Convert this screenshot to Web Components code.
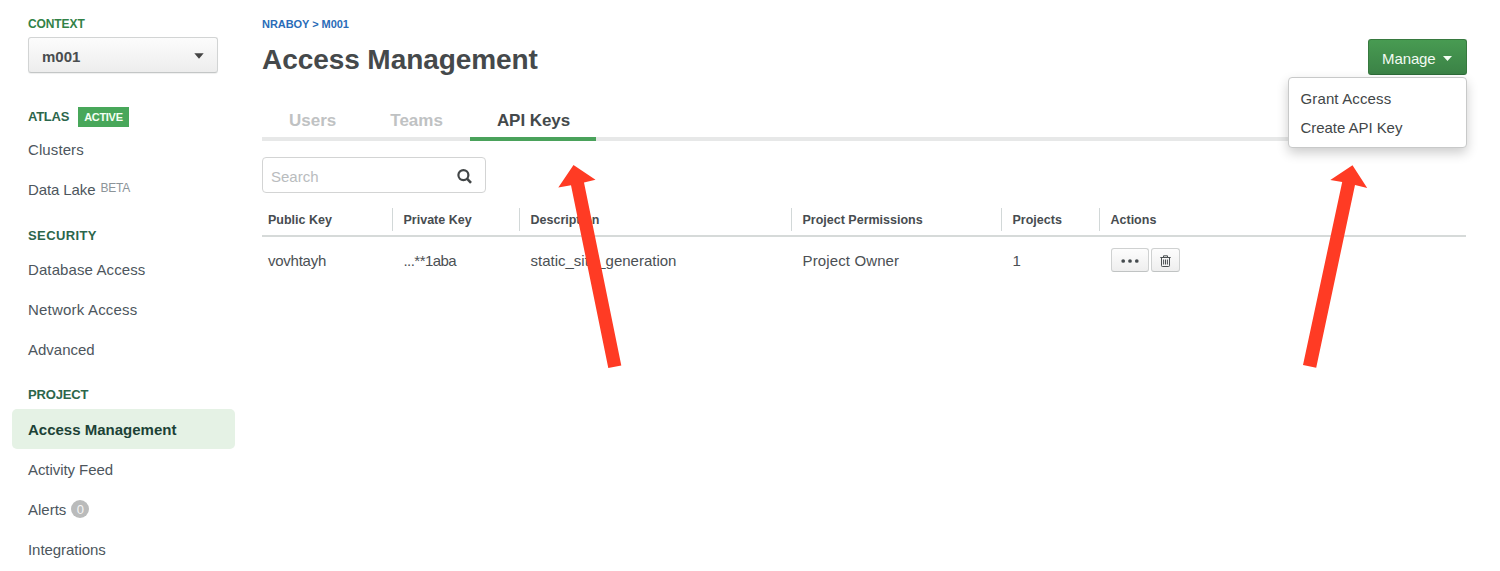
<!DOCTYPE html>
<html lang="en">
<head>
<meta charset="utf-8">
<title>Access Management</title>
<style>
html,body{margin:0;background:#fff;overflow:hidden}
body{font-family:"Liberation Sans",Arial,sans-serif;font-size:15px;color:#464c4f;height:571px}
</style>
</head>
<body>
<access-app></access-app>
<script>
const define = (name, html) => customElements.define(name, class extends HTMLElement {
  constructor() {
    super();
    this.attachShadow({ mode: 'open' }).innerHTML = '<style>*{box-sizing:border-box}</style>' + html;
  }
});

define('nav-heading', `<style>
:host{display:flex;box-sizing:border-box;height:40px;padding:11px 0 0 16px;align-items:center;gap:9px;font-size:13px;font-weight:700;color:#2c664b;white-space:nowrap}
</style><span><slot></slot></span><slot name="badge"></slot>`);

define('status-badge', `<style>
:host{display:block;box-sizing:border-box;width:51px;height:20px;padding-left:6px;background:#48a75a;color:#f4fff4;font-size:11px;line-height:20px;font-weight:700;letter-spacing:-.3px}
</style><slot></slot>`);

define('nav-item', `<style>
:host{display:flex;box-sizing:border-box;height:40px;padding-left:16px;align-items:center;gap:5px;border-radius:5px;color:#4d565d;white-space:nowrap}
:host([active]){background:#e5f2e5;color:#1c4236;font-weight:700}
</style><span><slot></slot></span><slot name="extra"></slot>`);

define('beta-tag', `<style>
:host{display:block;font-size:12px;color:#8c9499;margin-top:-3px;letter-spacing:-.2px}
</style><slot></slot>`);

define('count-badge', `<style>
:host{display:block;width:18px;height:18px;border-radius:9px;background:#babbbb;color:#f4f4f4;font-size:13px;line-height:19px;text-align:center}
</style><slot></slot>`);

define('context-select', `<style>
:host{display:flex;box-sizing:border-box;align-items:center;justify-content:space-between;margin:6px 17px 0 16px;height:36px;padding:2px 13px 0;border:1px solid #d2d4d4;border-bottom-color:#c3c6c6;border-radius:3px;background:linear-gradient(#fcfcfc,#ededed);box-shadow:0 1px 1px #0001;font-weight:700;color:#494d4f}
svg{display:block}
</style><slot></slot><svg width="10" height="6"><path d="M.3 .3h9.4L5 5.8z" fill="#444"/></svg>`);

define('side-bar', `<style>
:host{display:block;padding:17px 0 0 12px;width:235px;box-sizing:border-box}
.label{margin-left:16px;height:14px;line-height:15px;font-size:12px;font-weight:700;letter-spacing:-.1px;color:#328247}
nav{margin-top:17px}
</style>
<div class="label">CONTEXT</div>
<context-select>m001</context-select>
<nav>
<nav-heading style="letter-spacing:-.25px;padding-top:13px">ATLAS<status-badge slot="badge">ACTIVE</status-badge></nav-heading>
<nav-item style="height:39px;letter-spacing:.1px">Clusters</nav-item>
<nav-item style="letter-spacing:-.1px">Data Lake<beta-tag slot="extra">BETA</beta-tag></nav-item>
<nav-heading style="letter-spacing:.4px;padding-top:12px">SECURITY</nav-heading>
<nav-item style="letter-spacing:.1px">Database Access</nav-item>
<nav-item style="letter-spacing:.2px">Network Access</nav-item>
<nav-item>Advanced</nav-item>
<nav-heading style="letter-spacing:-.15px;padding-top:11px">PROJECT</nav-heading>
<nav-item active>Access Management</nav-item>
<nav-item style="letter-spacing:-.07px">Activity Feed</nav-item>
<nav-item>Alerts<count-badge slot="extra">0</count-badge></nav-item>
<nav-item style="letter-spacing:-.05px">Integrations</nav-item>
</nav>`);

define('menu-item', `<style>
:host{display:block;height:28.5px;line-height:28.5px;padding-left:11.5px;color:#424648;white-space:nowrap}
</style><slot></slot>`);

define('manage-menu', `<style>
:host{display:block;position:relative;width:99px;height:36px}
.btn{display:flex;height:36px;align-items:center;justify-content:space-between;padding:3px 14px 0 13px;border:1px solid #37793f;border-bottom-color:#2d6b38;border-radius:3px;background:linear-gradient(#489b52,#3b8246);color:#f2faf2;letter-spacing:-.1px}
.menu{position:absolute;right:0;top:38px;width:179px;height:71px;padding:7px 0 0;background:#fff;border:1px solid #c8c9c9;border-radius:4px;box-shadow:0 5px 12px rgba(0,0,0,.2);z-index:2}
</style>
<div class="btn"><span>Manage</span><svg width="9" height="5"><path d="M0 0h9L4.5 5z" fill="#f4fff4"/></svg></div>
<div class="menu"><slot></slot></div>`);

define('tab-item', `<style>
:host{display:block;box-sizing:border-box;height:41px;line-height:41px;padding:0 27px;border-bottom:4px solid #e7e8e8;font-size:17px;font-weight:700;color:#bfc2c3;white-space:nowrap}
:host([active]){border-bottom-color:#4aa25b;color:#44494b;padding-right:26px;letter-spacing:-.05px}
</style><slot></slot>`);

define('search-box', `<style>
:host{display:flex;box-sizing:border-box;width:224px;height:36px;margin-top:16px;padding:2px 13px 0 8px;align-items:center;justify-content:space-between;border:1px solid #d3d4d4;border-radius:4px;color:#b9bcbe}
</style><slot></slot><svg width="15" height="15" viewBox="0 0 15 15" fill="none" stroke="#424647" stroke-width="2.2"><circle cx="6.4" cy="6.1" r="5"/><path d="M10 9.7l4 4.1" stroke-width="2.6"/></svg>`);

define('icon-button', `<style>
:host{display:flex;box-sizing:border-box;height:24px;align-items:center;justify-content:center;border:1px solid #cfd1d1;border-bottom-color:#c0c3c3;border-radius:3px;background:linear-gradient(#fdfdfd,#eee)}
svg{display:block}
</style><slot></slot>`);

define('key-table', `<style>
:host{display:block;margin-top:9px}
.row{display:grid;grid-template-columns:130px 127px 272px 210px 98px 1fr;align-items:center}
.head{height:35px;border-bottom:2px solid #d6dad9;font-size:12.5px;font-weight:700;color:#474c50}
.head span{display:block;height:23px;line-height:24px;padding-left:10.5px;border-left:1px solid #d2d8d8;margin-top:1px;white-space:nowrap}
.head span:first-child{border:0;padding-left:6px}
.body{height:45px;color:#4b5054}
.body span{padding:1px 0 0 11.5px;white-space:nowrap}
.body span:first-child{padding-left:6px}
.acts{display:flex;gap:2px;padding:1px 0 0 12px}
</style>
<div class="row head"><span>Public Key</span><span>Private Key</span><span>Description</span><span>Project Permissions</span><span>Projects</span><span>Actions</span></div>
<div class="row body"><span style="letter-spacing:-.25px">vovhtayh</span><span style="letter-spacing:-.55px">...**1aba</span><span>static_site_generation</span><span style="letter-spacing:.13px">Project Owner</span><span>1</span>
<div class="acts">
<icon-button style="width:38px"><svg width="18" height="4" style="margin-top:2px"><g fill="#444a4d"><circle cx="2.2" cy="2" r="1.85"/><circle cx="9" cy="2" r="1.85"/><circle cx="15.8" cy="2" r="1.85"/></g></svg></icon-button>
<icon-button style="width:29px"><svg width="11" height="12" viewBox="0 0 11 12" style="margin-top:1px" fill="none" stroke="#4b5052" stroke-width="1"><path d="M.3 2.5h10.4M3.5 2.3V.8h4v1.5M1.5 2.6v8.1q0 .8.8.8h6.4q.8 0 .8-.8V2.6M3.6 4.5v5M5.5 4.5v5M7.4 4.5v5"/></svg></icon-button>
</div></div>`);

define('pointer-arrows', `<style>
:host{position:absolute;left:0;top:0;width:1500px;height:571px;pointer-events:none;z-index:3}
svg{display:block}
</style><svg width="1500" height="571" fill="#ff3b24"><path d="M573.5 165L558.3 187.6L571 185.2L608.3 368L621.3 365.4L584 182.4L595.5 179.7z"/><path d="M1352.5 165.3L1330.3 180L1342.2 182L1303 365L1316.2 367.8L1355 185L1367.2 188z"/></svg>`);

define('access-app', `<style>
:host{display:grid;grid-template-columns:262px 1204px;position:relative;width:1500px;height:571px;overflow:hidden}
.crumb{margin-top:17px;height:14px;line-height:14px;font-size:11px;font-weight:700;letter-spacing:-.05px;color:#2a6cb8}
.top{display:flex;justify-content:space-between;height:69px;padding-top:8px;margin-right:-1px}
h1{margin:4px 0 0;font-size:28px;line-height:34px;font-weight:700;letter-spacing:-.07px;color:#45494b}
.tabs{display:flex;height:41px}
.tabs i{flex:1;border-bottom:4px solid #e7e8e8}
</style>
<side-bar></side-bar>
<main>
<div class="crumb">NRABOY &gt; M001</div>
<div class="top"><h1>Access Management</h1><manage-menu><menu-item style="letter-spacing:.13px">Grant Access</menu-item><menu-item style="letter-spacing:-.05px">Create API Key</menu-item></manage-menu></div>
<div class="tabs"><tab-item>Users</tab-item><tab-item>Teams</tab-item><tab-item active>API Keys</tab-item><i></i></div>
<search-box>Search</search-box>
<key-table></key-table>
</main>
<pointer-arrows></pointer-arrows>`);
</script>
</body>
</html>
